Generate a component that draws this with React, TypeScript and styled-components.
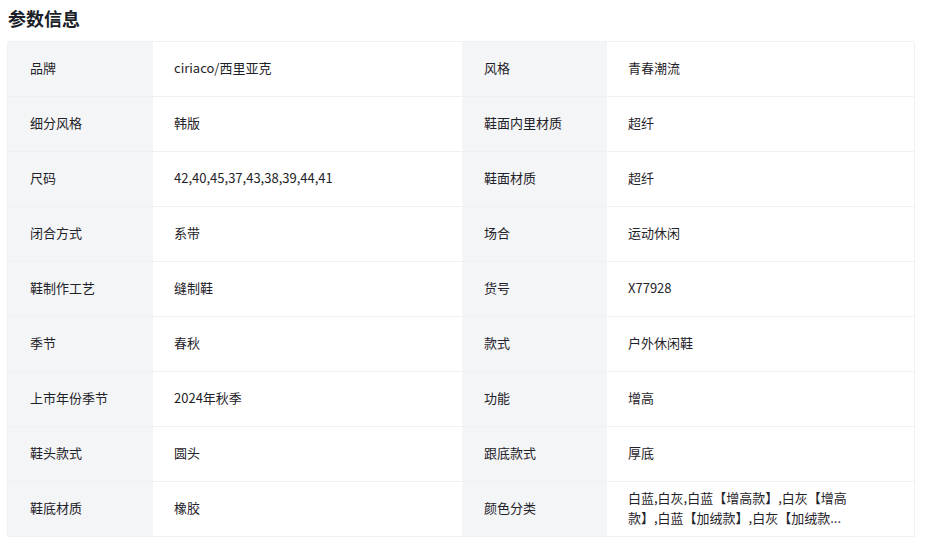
import styled, { createGlobalStyle } from 'styled-components'

const GlobalStyle = createGlobalStyle`
  body {
    margin: 0;
    background: #ffffff;
    font-family: "Noto Sans CJK SC", "Noto Sans", Arial, sans-serif;
    color: #1f2329;
  }
`

const Wrapper = styled.div`
  padding: 4px 14px 0 7px;
`
const Title = styled.h2`
  margin: 0 0 0 1px;
  height: 37px;
  font-size: 18px;
  font-weight: 700;
  line-height: 28px;
  color: #1b1f2a;
`
const Table = styled.div`
  display: grid;
  grid-template-columns: 145px 309px 145px 307px;
  grid-auto-rows: 55px;
  width: 908px;
  border: 1px solid #f0f1f3;
  border-bottom: 0;
  box-sizing: border-box;
  border-radius: 2px;
`
const Label = styled.div`
  display: flex;
  align-items: center;
  padding: 0 0 3px 22px;
  background: #f4f5f7;
  font-size: 13px;
  color: #1f2329;
  border-bottom: 1px solid #f0f1f3;
`
const Value = styled.div`
  display: flex;
  align-items: center;
  padding: 0 0 3px 21px;
  background: #ffffff;
  font-size: 13px;
  color: #1f2329;
  border-bottom: 1px solid #f0f1f3;
`
const ValueText = styled.span`
  max-width: 236px;
  line-height: 20px;
`

const params: [string, string][] = [
  ['品牌', 'ciriaco/西里亚克'],
  ['风格', '青春潮流'],
  ['细分风格', '韩版'],
  ['鞋面内里材质', '超纤'],
  ['尺码', '42,40,45,37,43,38,39,44,41'],
  ['鞋面材质', '超纤'],
  ['闭合方式', '系带'],
  ['场合', '运动休闲'],
  ['鞋制作工艺', '缝制鞋'],
  ['货号', 'X77928'],
  ['季节', '春秋'],
  ['款式', '户外休闲鞋'],
  ['上市年份季节', '2024年秋季'],
  ['功能', '增高'],
  ['鞋头款式', '圆头'],
  ['跟底款式', '厚底'],
  ['鞋底材质', '橡胶'],
  ['颜色分类', '白蓝,白灰,白蓝【增高款】,白灰【增高款】,白蓝【加绒款】,白灰【加绒款...'],
]

export default function App() {
  return (
    <Wrapper>
      <GlobalStyle />
      <Title>参数信息</Title>
      <Table>
        {params.map(([name, value]) => [
          <Label key={name + '-l'}>{name}</Label>,
          <Value key={name + '-v'}>
            <ValueText>{value}</ValueText>
          </Value>,
        ])}
      </Table>
    </Wrapper>
  )
}
